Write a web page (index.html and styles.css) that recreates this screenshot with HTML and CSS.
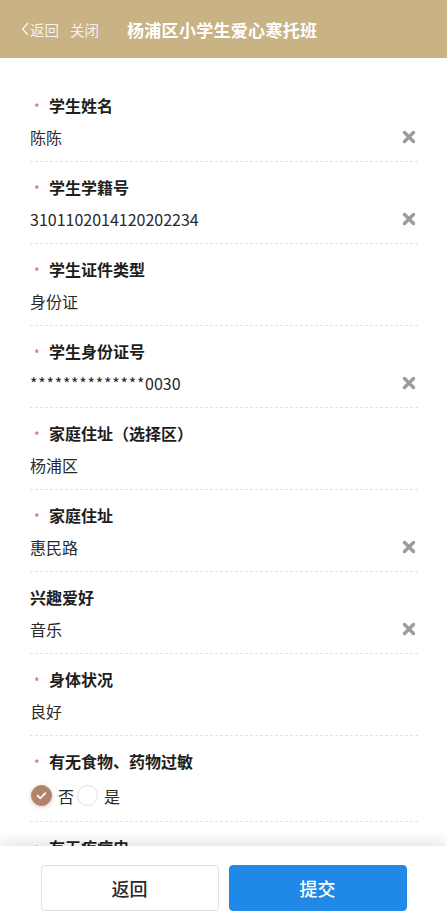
FILE: index.html
```html
<!DOCTYPE html>
<html lang="zh-CN">
<head>
<meta charset="utf-8">
<title>杨浦区小学生爱心寒托班</title>
<link rel="stylesheet" href="styles.css">
</head>
<body>
<div class="page">
  <header class="topbar">
    <span class="back"><svg class="chev" viewBox="0 0 8 14" width="8" height="14"><path d="M7 1 L1.5 7 L7 13" fill="none" stroke="currentColor" stroke-width="1.4"/></svg>返回</span>
    <span class="close">关闭</span>
    <span class="title">杨浦区小学生爱心寒托班</span>
  </header>
  <main class="form">
    <div class="field">
      <div class="label"><span class="req">*</span>学生姓名</div>
      <div class="value"><span>陈陈</span><svg class="clear" viewBox="0 0 14 14"><path d="M2.5 2.5 L11.5 11.5 M11.5 2.5 L2.5 11.5"/></svg></div>
    </div>
    <div class="field">
      <div class="label"><span class="req">*</span>学生学籍号</div>
      <div class="value"><span>3101102014120202234</span><svg class="clear" viewBox="0 0 14 14"><path d="M2.5 2.5 L11.5 11.5 M11.5 2.5 L2.5 11.5"/></svg></div>
    </div>
    <div class="field">
      <div class="label"><span class="req">*</span>学生证件类型</div>
      <div class="value"><span>身份证</span></div>
    </div>
    <div class="field">
      <div class="label"><span class="req">*</span>学生身份证号</div>
      <div class="value"><span><span class="stars">**************</span>0030</span><svg class="clear" viewBox="0 0 14 14"><path d="M2.5 2.5 L11.5 11.5 M11.5 2.5 L2.5 11.5"/></svg></div>
    </div>
    <div class="field">
      <div class="label"><span class="req">*</span>家庭住址（选择区）</div>
      <div class="value"><span>杨浦区</span></div>
    </div>
    <div class="field">
      <div class="label"><span class="req">*</span>家庭住址</div>
      <div class="value"><span>惠民路</span><svg class="clear" viewBox="0 0 14 14"><path d="M2.5 2.5 L11.5 11.5 M11.5 2.5 L2.5 11.5"/></svg></div>
    </div>
    <div class="field">
      <div class="label">兴趣爱好</div>
      <div class="value"><span>音乐</span><svg class="clear" viewBox="0 0 14 14"><path d="M2.5 2.5 L11.5 11.5 M11.5 2.5 L2.5 11.5"/></svg></div>
    </div>
    <div class="field">
      <div class="label"><span class="req">*</span>身体状况</div>
      <div class="value"><span>良好</span></div>
    </div>
    <div class="field">
      <div class="label"><span class="req">*</span>有无食物、药物过敏</div>
      <div class="radios">
        <span class="radio checked"><svg viewBox="0 0 22 22"><path d="M6.5 11.2 L9.6 14.2 L15.5 8.2" fill="none" stroke="#fff" stroke-width="2" stroke-linecap="round" stroke-linejoin="round"/></svg></span><span class="rlabel">否</span>
        <span class="radio"></span><span class="rlabel">是</span>
      </div>
    </div>
    <div class="field">
      <div class="label"><span class="req">*</span>有无疾病史</div>
    </div>
  </main>
  <footer class="actions">
    <button class="btn btn-back">返回</button>
    <button class="btn btn-submit">提交</button>
  </footer>
</div>
</body>
</html>
```

FILE: styles.css
```css
html, body {
  margin: 0;
  padding: 0;
  background: #fff;
}
body {
  font-family: "Noto Sans CJK SC", "Noto Sans", sans-serif;
  color: #222;
}
.page {
  height: 100vh;
  display: flex;
  flex-direction: column;
  overflow: hidden;
}
.topbar {
  flex: 0 0 58px;
  height: 58px;
  background: #c9b284;
  display: flex;
  align-items: center;
  padding-left: 21px;
  color: #fff;
  box-sizing: border-box;
}
.back {
  display: flex;
  align-items: center;
  font-size: 14.5px;
  color: rgba(255,255,255,0.85);
}
.chev {
  margin-right: 1px;
}
.close {
  margin-left: 11px;
  font-size: 14.5px;
  color: rgba(255,255,255,0.85);
}
.title {
  margin-left: 28px;
  font-size: 17px;
  font-weight: 700;
  letter-spacing: 0.3px;
}
.form {
  flex: 1 1 auto;
  overflow: hidden;
  padding: 22px 29px 0 30px;
}
.field {
  padding: 14px 0 13px;
  border-bottom: 1px dashed #e3e3e3;
}
.label {
  height: 22px;
  line-height: 22px;
  font-size: 16px;
  font-weight: 700;
  color: #1e1e1e;
  display: flex;
  align-items: center;
}
.req {
  color: #d0606e;
  font-size: 12px;
  font-weight: 400;
  width: 19px;
  padding-left: 4px;
  padding-top: 5px;
  box-sizing: border-box;
}
.value {
  margin-top: 10px;
  height: 22px;
  line-height: 22px;
  font-size: 16px;
  color: #2a2a2a;
  display: flex;
  align-items: center;
  justify-content: space-between;
}
.stars {
  letter-spacing: 0.75px;
}
.clear {
  width: 14px;
  height: 14px;
  margin-right: 2px;
}
.clear path {
  stroke: #9c9c9c;
  stroke-width: 3.4;
  stroke-linecap: round;
  fill: none;
}
.radios {
  margin-top: 11px;
  height: 25px;
  display: flex;
  align-items: center;
  font-size: 16px;
  color: #2a2a2a;
}
.radio {
  width: 21px;
  height: 21px;
  border-radius: 50%;
  box-sizing: border-box;
  border: 1px solid #dedede;
  background: #fff;
  display: inline-flex;
  align-items: center;
  justify-content: center;
}
.radio.checked {
  background: #b0846a;
  border-color: #b0846a;
  box-shadow: 0 1px 4px rgba(176,132,106,0.45);
  margin-left: 1px;
}
.radio svg {
  width: 21px;
  height: 21px;
}
.rlabel {
  margin-left: 6px;
  margin-right: 3px;
}
.actions {
  flex: 0 0 65px;
  height: 65px;
  position: relative;
  background: #fff;
  box-shadow: 0 -6px 12px rgba(0,0,0,0.09);
  display: flex;
  justify-content: center;
  align-items: flex-start;
  gap: 10px;
  padding-top: 19px;
  box-sizing: border-box;
  overflow: hidden;
}
.btn {
  width: 178px;
  height: 46px;
  border-radius: 4px;
  font-family: "Noto Sans CJK SC", "Noto Sans", sans-serif;
  font-size: 18px;
  font-weight: 500;
  padding: 0;
  flex: 0 0 auto;
}
.btn-back {
  background: #fff;
  border: 1px solid #e2e2e2;
  color: #2a2a2a;
}
.btn-submit {
  background: #2088e6;
  border: 1px solid #2088e6;
  color: #fff;
}
```
